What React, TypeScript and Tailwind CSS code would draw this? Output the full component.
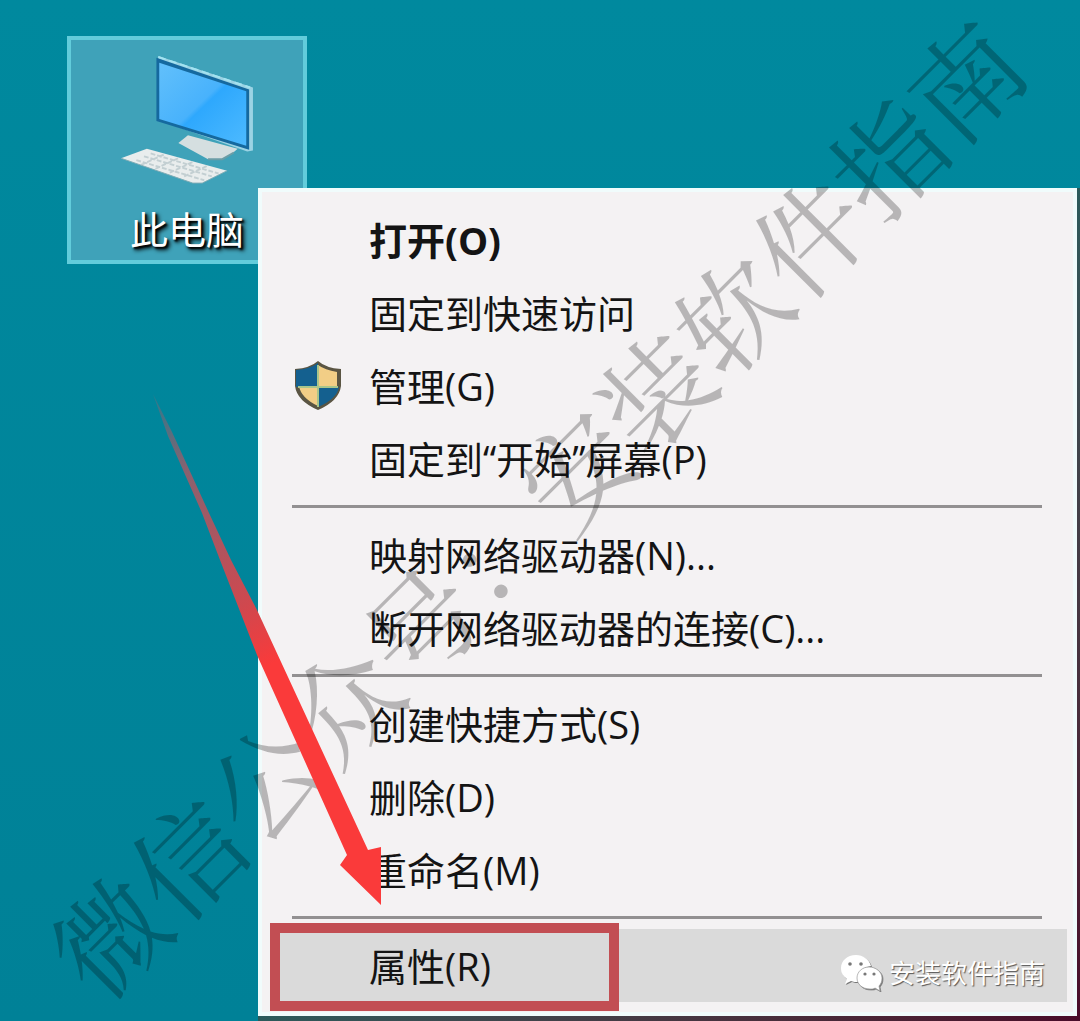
import clsx from "clsx";

type TMenuItem = {
    label: string;
    bold?: boolean;
    shield?: boolean;
    active?: boolean;
};

const GROUPS: TMenuItem[][] = [
    [
        { label: "打开(O)", bold: true },
        { label: "固定到快速访问" },
        { label: "管理(G)", shield: true },
        { label: "固定到“开始”屏幕(P)" },
    ],
    [
        { label: "映射网络驱动器(N)..." },
        { label: "断开网络驱动器的连接(C)..." },
    ],
    [
        { label: "创建快捷方式(S)" },
        { label: "删除(D)" },
        { label: "重命名(M)" },
    ],
    [
        { label: "属性(R)", active: true },
    ],
];

function ComputerIcon () {
    return (
        <svg aria-hidden="true" className="h-[130px] w-[134px]" viewBox="0 0 140 136">
            <defs>
                <linearGradient id="screen" x1="0" x2="1" y1="0" y2="1">
                    <stop offset="0" stopColor="#62c0fb" />
                    <stop offset=".48" stopColor="#48b2fc" />
                    <stop offset=".52" stopColor="#2ea8fd" />
                    <stop offset="1" stopColor="#4dbaff" />
                </linearGradient>
            </defs>
            <g transform="translate(-3 0)">
                <path d="M43 1 L142 34 V100 L136 101 L43 68Z" fill="#9bd3e4" />
                <path d="M41 3 L138 36 V99 L41 69Z" fill="#15699f" />
                <path d="M44 8 L135 38 V95 L44 67Z" fill="url(#screen)" />
                <path d="M43 2 L139 34" fill="none" stroke="#a3e3f1" strokeDasharray="8 4" strokeWidth="2" />
                <path d="M64 92 L74 84 L126 98 L119 104 L109 109 H95Z" fill="#d5dfe0" />
                <path d="M95 109 L110 109 L122 102" fill="none" stroke="#6b9da6" strokeWidth="2" />
            </g>
            <path d="M1 108 L28 98 L112 121 L86 134 L76 134Z" fill="#e9eded" />
            <path
                d="M17 110 L88 131 M25 106 L96 127 M32 103 L103 124 M22 115 L46 104 M37 119 L61 108 M52 123 L76 112 M67 127 L91 116"
                fill="none"
                stroke="#c3cfd2"
                strokeDasharray="5 2"
                strokeWidth="2"
            />
            <path d="M1 108 L76 134 H86 L112 121" fill="none" stroke="#7eabb5" strokeWidth="1" />
        </svg>
    );
}

function ShieldIcon () {
    return (
        <svg aria-hidden="true" className="h-[50px] w-[46px]" viewBox="0 0 46 50">
            <defs>
                <clipPath id="shield">
                    <path d="M23 0 Q31 7 46 8 V25 Q44 40 23 49 Q2 40 0 25 V8 Q15 7 23 0Z" />
                </clipPath>
            </defs>
            <g clipPath="url(#shield)">
                <path d="M0 0H46V50H0Z" fill="#5a5543" />
                <path d="M4 11 Q16 9 23 4 Q30 9 42 11 V25 Q40 37 23 45 Q6 37 4 25Z" fill="#f2ce86" />
                <path d="M1 9 Q15 8 23 2 V26H1Z M23 26H44Q42 38 23 46Z" fill="#14608f" />
                <path d="M23 4V46 M3 26H43" stroke="#a9c58a" strokeWidth="2" />
            </g>
        </svg>
    );
}

function WechatIcon () {
    return (
        <svg aria-hidden="true" className="h-[36px] w-[42px] drop-shadow-[1px_1px_0_#777]" viewBox="0 0 42 36">
            <path d="M15 0C6 0 0 6 0 13C0 18 2 21 6 24L4 29L10 26C12 27 15 27 17 27C15 19 21 12 30 11C28 4 22 0 15 0Z" fill="#fff" />
            <path
                d="M28 12C21 12 16 17 16 23C16 29 21 34 29 34C31 34 33 34 34 33L39 36L38 31C40 29 41 26 41 23C41 17 35 12 28 12Z"
                fill="#fff"
                stroke="#999"
                strokeWidth=".7"
            />
            <g fill="#777">
                <circle cx="9" cy="9" r="1.8" />
                <circle cx="20" cy="9" r="1.8" />
                <circle cx="24" cy="19" r="1.6" />
                <circle cx="33" cy="19" r="1.6" />
            </g>
        </svg>
    );
}

function Arrow () {
    return (
        <svg aria-hidden="true" className="pointer-events-none absolute left-[150px] top-[390px] h-[520px] w-[240px]" viewBox="0 0 240 520">
            <defs>
                <linearGradient id="arrow" gradientUnits="userSpaceOnUse" x1="0" x2="130" y1="0" y2="270">
                    <stop offset="0" stopColor="#c5525c" stopOpacity=".2" />
                    <stop offset=".3" stopColor="#c5525c" stopOpacity=".7" />
                    <stop offset=".8" stopColor="#d2474d" />
                    <stop offset="1" stopColor="#fa3a3a" />
                </linearGradient>
            </defs>
            <path
                d="M3 4 L22 42 L59 123 L81 170 L107 220 L218 460 L231 457 V515 L190 475 L197 465 L107 265 L70 170 L52 123 L18 46Z"
                fill="url(#arrow)"
            />
        </svg>
    );
}

function MenuItem ({ label, bold, shield, active }: TMenuItem) {
    return (
        <li className="relative" role="none">
            <button
                className={clsx(
                    "flex h-[73px] w-full items-center whitespace-nowrap text-left text-[38px] leading-none text-[#141414]",
                    bold && "font-bold",
                    active && "bg-[#dadada]",
                )}
                role="menuitem"
                type="button"
            >
                <span className="flex w-[99px] shrink-0 pl-[25px]">
                    {shield && <ShieldIcon />}
                </span>
                {label}
            </button>

            {active && (
                <div className="pointer-events-none absolute -bottom-[9px] -top-[6px] left-0 w-[349px] border-[10px] border-[#c24e53]" />
            )}
        </li>
    );
}

function ContextMenu () {
    return (
        <div className="absolute left-[258px] right-0 top-[188px] bg-linear-to-br from-[#1d5f60] via-[#2b5a5b] to-[#4a0c2a] pb-[5px] pr-[3px]">
            <div
                className="border-4 border-[#f0fcfc] bg-[#f4f2f3] pb-[10px] pl-[8px] pr-[6px] pt-[11px]"
                role="menu"
            >
                {GROUPS.map((items, index) => (
                    <div key={items[0].label}>
                        {index > 0 && <hr className="mb-[10px] ml-[22px] mr-[25px] mt-[10px] border-t-[3px] border-[#929091]" />}
                        <ul role="none">
                            {items.map((item) => <MenuItem key={item.label} {...item} />)}
                        </ul>
                    </div>
                ))}
            </div>
        </div>
    );
}

export default function App () {
    return (
        <main className="relative min-h-screen overflow-hidden bg-linear-to-b from-[#00899e] to-[#008197] pl-[67px] pt-[36px] font-['Open_Sans','Noto_Sans_CJK_SC',sans-serif]">
            <button
                className="flex h-[228px] w-[240px] flex-col items-center border-4 border-[#62ccdb] bg-[#3fa2b9] pt-[15px]"
                type="button"
            >
                <ComputerIcon />
                <span className="mt-[20px] text-[38px] leading-[48px] text-white [text-shadow:2px_2px_2px_#000,3px_3px_4px_#000]">
                    此电脑
                </span>
            </button>

            <ContextMenu />

            <div className="pointer-events-none absolute inset-0 flex items-center justify-center pb-[12px] pr-[12px]">
                <p className="-rotate-45 whitespace-nowrap font-['SimSun','Noto_Serif_CJK_SC','Noto_Sans_CJK_SC',serif] text-[110px] leading-none text-black/25">
                    微信公众号：安装软件指南
                </p>
            </div>

            <Arrow />

            <div className="absolute bottom-[28px] right-[35px] flex items-center gap-[6px]">
                <WechatIcon />
                <span className="text-[26px] leading-[40px] text-white [text-shadow:1px_1px_1px_#555]">
                    安装软件指南
                </span>
            </div>
        </main>
    );
}
